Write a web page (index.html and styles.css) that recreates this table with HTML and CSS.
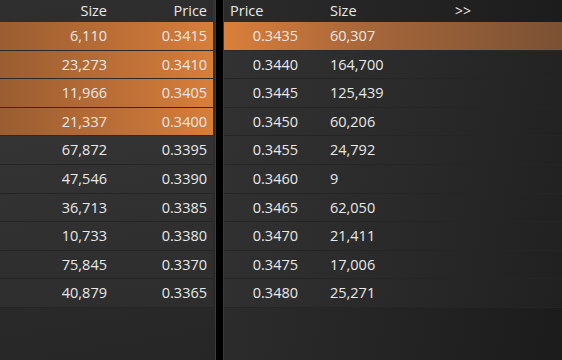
FILE: index.html
```html
<!DOCTYPE html>
<html>
<head>
<meta charset="utf-8">
<link rel="stylesheet" href="styles.css">
</head>
<body>
<div class="book">
  <div class="panel bids">
    <div class="head row-grid-l">
      <div class="c">Size</div>
      <div class="c">Price</div>
    </div>
    <div class="rows">
      <div class="row row-grid-l hl-l"><div class="c">6,110</div><div class="c">0.3415</div></div>
      <div class="row row-grid-l hl-l"><div class="c">23,273</div><div class="c">0.3410</div></div>
      <div class="row row-grid-l hl-l"><div class="c">11,966</div><div class="c">0.3405</div></div>
      <div class="row row-grid-l hl-l"><div class="c">21,337</div><div class="c">0.3400</div></div>
      <div class="row row-grid-l"><div class="c">67,872</div><div class="c">0.3395</div></div>
      <div class="row row-grid-l"><div class="c">47,546</div><div class="c">0.3390</div></div>
      <div class="row row-grid-l"><div class="c">36,713</div><div class="c">0.3385</div></div>
      <div class="row row-grid-l"><div class="c">10,733</div><div class="c">0.3380</div></div>
      <div class="row row-grid-l"><div class="c">75,845</div><div class="c">0.3370</div></div>
      <div class="row row-grid-l"><div class="c">40,879</div><div class="c">0.3365</div></div>
    </div>
  </div>
  <div class="divider"></div>
  <div class="panel asks">
    <div class="head row-grid-r">
      <div class="c hp">Price</div>
      <div class="c">Size</div>
      <div class="c more">&gt;&gt;</div>
    </div>
    <div class="rows">
      <div class="row row-grid-r hl-r"><div class="c p">0.3435</div><div class="c">60,307</div><div class="c"></div></div>
      <div class="row row-grid-r"><div class="c p">0.3440</div><div class="c">164,700</div><div class="c"></div></div>
      <div class="row row-grid-r"><div class="c p">0.3445</div><div class="c">125,439</div><div class="c"></div></div>
      <div class="row row-grid-r"><div class="c p">0.3450</div><div class="c">60,206</div><div class="c"></div></div>
      <div class="row row-grid-r"><div class="c p">0.3455</div><div class="c">24,792</div><div class="c"></div></div>
      <div class="row row-grid-r"><div class="c p">0.3460</div><div class="c">9</div><div class="c"></div></div>
      <div class="row row-grid-r"><div class="c p">0.3465</div><div class="c">62,050</div><div class="c"></div></div>
      <div class="row row-grid-r"><div class="c p">0.3470</div><div class="c">21,411</div><div class="c"></div></div>
      <div class="row row-grid-r"><div class="c p">0.3475</div><div class="c">17,006</div><div class="c"></div></div>
      <div class="row row-grid-r"><div class="c p">0.3480</div><div class="c">25,271</div><div class="c"></div></div>
    </div>
  </div>
</div>
</body>
</html>
```

FILE: styles.css
```css
html, body {
  margin: 0;
  padding: 0;
  width: 562px;
  height: 360px;
  overflow: hidden;
  background: #000;
}

.book {
  display: flex;
  width: 562px;
  height: 360px;
  font-family: "Open Sans", "Liberation Sans", sans-serif;
  font-size: 14.5px;
  color: #e8e8e8;
}

.panel {
  display: flex;
  flex-direction: column;
}

.bids {
  width: 216px;
  box-sizing: border-box;
  border-right: 1px solid #3c3c3c;
  padding-right: 2px;
  background: linear-gradient(170deg, #353535 0%, #2c2c2c 60%, #262626 100%);
}

.divider {
  width: 7px;
  background: #000;
}

.asks {
  flex: 1;
  box-sizing: border-box;
  border-left: 1px solid #3a3a3a;
  background: linear-gradient(100deg, #2e2e2e 0%, #252525 50%, #1b1b1b 100%);
}

.head {
  height: 22px;
  line-height: 22px;
  background: rgba(0, 0, 0, 0.1);
}

.asks .head {
  background: linear-gradient(to right, #2b2b2b, #1c1c1c);
}

.rows {
  display: flex;
  flex-direction: column;
}

.row {
  height: 28.6px;
  line-height: 27.6px;
  box-sizing: border-box;
  border-bottom: 1px solid #252525;
  background: rgba(255, 255, 255, 0.025);
}

.row-grid-l {
  display: grid;
  grid-template-columns: 113px 100px;
}

.row-grid-l .c {
  text-align: right;
  padding-right: 6px;
}

.row-grid-r {
  display: grid;
  grid-template-columns: 98px 126px 1fr;
}

.row-grid-r .c {
  padding-left: 8px;
  white-space: nowrap;
}

.row-grid-r .c.hp {
  padding-left: 6px;
}

.row-grid-r .c.p {
  text-align: right;
  padding-left: 0;
  padding-right: 24px;
}

.row-grid-r .c.more {
  padding-left: 7px;
  font-size: 14px;
}

.hl-l {
  background: linear-gradient(to right, #9a5d31 0%, #b96d36 50%, #d87e3a 100%);
  border-bottom-color: #2a2a2a;
}

.hl-r {
  background: linear-gradient(to right, #da7f3a 0%, #a9673a 40%, #7a5234 100%);
  border-bottom-color: #2a2a2a;
}
```
